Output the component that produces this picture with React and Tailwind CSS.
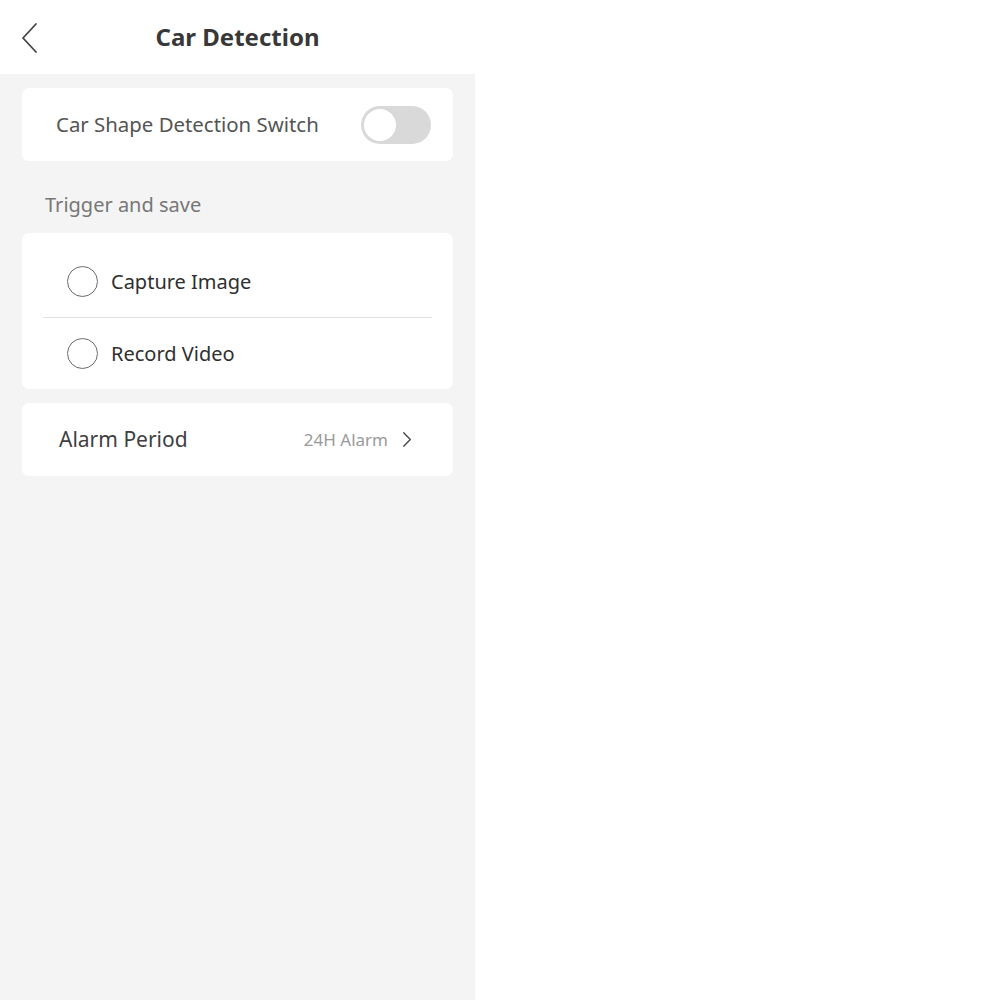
import { useState } from "react";

function Chevron({ className }) {
  return (
    <svg viewBox="0 0 12 20" className={className} fill="none" stroke="currentColor" strokeWidth="1.6" strokeLinecap="round" strokeLinejoin="round">
      <path d="M2 2l8 8-8 8" />
    </svg>
  );
}

function Radio({ label }) {
  return (
    <div className="flex items-center h-[71px] pl-[45px]">
      <span className="w-[31px] h-[31px] rounded-full border-[1.5px] border-[#6b6b6b]" />
      <span className="ml-[13px] text-[20px] text-[#2f2f2f]">{label}</span>
    </div>
  );
}

export default function App() {
  const [on, setOn] = useState(false);

  return (
    <div className="w-full h-[1000px] bg-white flex" style={{ fontFamily: "'Noto Sans', 'Open Sans', sans-serif" }}>
      <div className="w-[475px] h-full bg-[#f4f4f4] flex flex-col">
        {/* Header */}
        <header className="h-[74px] bg-white relative flex items-center justify-center">
          <button className="absolute left-[21px] top-[22px] text-[#444]">
            <svg viewBox="0 0 18 32" className="w-[18px] h-[32px]" fill="none" stroke="currentColor" strokeWidth="1.8" strokeLinecap="round" strokeLinejoin="round">
              <path d="M15 2L2 16l13 14" />
            </svg>
          </button>
          <h1 className="text-[24px] font-bold text-[#383838]">Car Detection</h1>
        </header>

        <div className="px-[22px] pt-[14px] flex flex-col">
          {/* Switch card */}
          <div className="h-[73px] bg-white rounded-[7px] flex items-center justify-between pl-[34px] pr-[22px]">
            <span className="text-[20.4px] text-[#545454]">Car Shape Detection Switch</span>
            <button
              onClick={() => setOn(!on)}
              className={`w-[70px] h-[38px] rounded-full p-[3px] flex ${on ? "bg-[#3b82f6] justify-end" : "bg-[#d9d9d9] justify-start"}`}
            >
              <span className="w-[32px] h-[32px] rounded-full bg-white" />
            </button>
          </div>

          {/* Section label */}
          <div className="h-[72px] flex items-end pb-[14px] pl-[23px]">
            <span className="text-[20px] leading-[28px] text-[#777]">Trigger and save</span>
          </div>

          {/* Trigger card */}
          <div className="bg-white rounded-[7px] pt-[13px]">
            <Radio label="Capture Image" />
            <div className="mx-[21px] h-px bg-[#e2e2e2]" />
            <Radio label="Record Video" />
          </div>

          {/* Alarm period */}
          <div className="mt-[14px] h-[73px] bg-white rounded-[7px] flex items-center justify-between pl-[37px] pr-[41px]">
            <span className="text-[21px] text-[#3f3f3f]">Alarm Period</span>
            <div className="flex items-center gap-[14px]">
              <span className="text-[17px] text-[#9a9a9a]">24H Alarm</span>
              <Chevron className="w-[10px] h-[17px] text-[#444]" />
            </div>
          </div>
        </div>
      </div>
      <div className="flex-1 bg-white" />
    </div>
  );
}
